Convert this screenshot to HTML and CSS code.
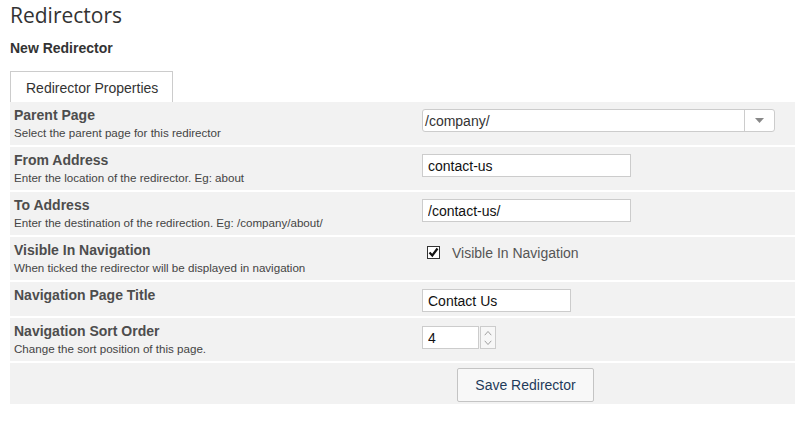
FILE: index.html
```html
<!DOCTYPE html>
<html lang="en">
<head>
    <meta charset="UTF-8">
    <title>Redirectors</title>
    <link rel="stylesheet" href="styles.css">
</head>
<body>
    <h1>Redirectors</h1>
    <h2>New Redirector</h2>

    <div class="tabs">
        <div class="tab">Redirector Properties</div>
    </div>

    <div class="panel">
        <div class="row">
            <div class="info">
                <div class="label">Parent Page</div>
                <div class="desc">Select the parent page for this redirector</div>
            </div>
            <div class="field">
                <div class="chosen">
                    <span class="chosen-text">/company/</span>
                    <span class="chosen-arrow">
                        <svg width="9" height="5" viewBox="0 0 9 5"><path d="M0 0h9L4.5 5z" fill="#888"/></svg>
                    </span>
                </div>
            </div>
        </div>

        <div class="row">
            <div class="info">
                <div class="label">From Address</div>
                <div class="desc">Enter the location of the redirector. Eg: about</div>
            </div>
            <div class="field">
                <input type="text" class="text wide" value="contact-us">
            </div>
        </div>

        <div class="row">
            <div class="info">
                <div class="label">To Address</div>
                <div class="desc">Enter the destination of the redirection. Eg: /company/about/</div>
            </div>
            <div class="field">
                <input type="text" class="text wide" value="/contact-us/">
            </div>
        </div>

        <div class="row">
            <div class="info">
                <div class="label">Visible In Navigation</div>
                <div class="desc">When ticked the redirector will be displayed in navigation</div>
            </div>
            <div class="field">
                <label class="check">
                    <span class="box">
                        <svg width="11" height="11" viewBox="0 0 11 11"><path d="M1.5 5.5l2.8 3L9.5 1.5" fill="none" stroke="#111" stroke-width="2.2"/></svg>
                    </span>
                    Visible In Navigation
                </label>
            </div>
        </div>

        <div class="row">
            <div class="info">
                <div class="label">Navigation Page Title</div>
            </div>
            <div class="field">
                <input type="text" class="text medium" value="Contact Us">
            </div>
        </div>

        <div class="row">
            <div class="info">
                <div class="label">Navigation Sort Order</div>
                <div class="desc">Change the sort position of this page.</div>
            </div>
            <div class="field">
                <div class="number">
                    <input type="text" class="text small" value="4">
                    <span class="spin">
                        <svg width="15" height="22" viewBox="0 0 15 22"><path d="M4 8l3.5-4L11 8M4 14l3.5 4L11 14" fill="none" stroke="#999" stroke-width="1"/></svg>
                    </span>
                </div>
            </div>
        </div>

        <div class="row last">
            <button class="save">Save Redirector</button>
        </div>
    </div>
</body>
</html>
```

FILE: styles.css
```css
body {
    margin: 0 0 0 10px;
    font-family: "Liberation Sans", Arial, sans-serif;
    color: #333;
    background: #fff;
}
h1 {
    font-family: "Open Sans", sans-serif;
    font-weight: normal;
    font-size: 21px;
    line-height: 30px;
    margin: 0;
    color: #333;
}
h2 {
    font-size: 14px;
    font-weight: bold;
    line-height: 18px;
    margin: 9px 0 0;
}
.tabs {
    margin-top: 14px;
    display: flex;
}
.tab {
    border: 1px solid #ccc;
    border-bottom: none;
    padding: 0 14px 0 15px;
    height: 30px;
    line-height: 32px;
    font-size: 14px;
    background: #fff;
}
.panel {
    background: #f2f2f2;
}
.row {
    display: grid;
    grid-template-columns: 408px 1fr;
    align-items: start;
    padding: 4px 4px 3px;
    border-bottom: 2px solid #fff;
}
.row.last {
    border-bottom: none;
    display: block;
    padding: 5px 0 2px 447px;
}
.label {
    font-size: 14px;
    font-weight: bold;
    color: #4d4d4d;
    line-height: 18px;
}
.desc {
    font-size: 11.6px;
    color: #444;
    line-height: 18px;
}
.field {
    padding-top: 3px;
    padding-bottom: 1px;
}
.text {
    box-sizing: border-box;
    height: 23px;
    border: 1px solid #ccc;
    padding: 2px 5px;
    font-family: "Liberation Sans", Arial, sans-serif;
    font-size: 14px;
    color: #111;
    background: #fff;
    margin: 0;
    outline: none;
}
.wide {
    width: 209px;
}
.medium {
    width: 149px;
}
.small {
    width: 57px;
}
.chosen {
    box-sizing: border-box;
    width: 353px;
    height: 23px;
    border: 1px solid #ccc;
    border-radius: 3px;
    background: #fff;
    display: flex;
    align-items: center;
}
.chosen-text {
    flex: 1;
    padding-left: 2px;
    font-size: 14px;
    color: #333;
}
.chosen-arrow {
    width: 29px;
    height: 100%;
    border-left: 1px solid #ccc;
    display: flex;
    align-items: center;
    justify-content: center;
}
.check {
    display: flex;
    align-items: center;
    font-size: 14px;
    color: #555;
    margin: 1px 0 0 5px;
    height: 15px;
}
.box {
    box-sizing: border-box;
    width: 13px;
    height: 13px;
    border: 1px solid #333;
    background: #fff;
    margin-right: 12px;
    display: flex;
    align-items: center;
    justify-content: center;
}
.number {
    display: flex;
    margin-top: 1px;
}
.spin {
    box-sizing: border-box;
    width: 16px;
    height: 23px;
    border: 1px solid #ccc;
    margin-left: 1px;
    background: #f7f7f7;
    display: flex;
    align-items: center;
    justify-content: center;
}
.save {
    box-sizing: border-box;
    width: 137px;
    height: 34px;
    border: 1px solid #c4c4c4;
    border-radius: 2px;
    background: #f8f8f8;
    color: #1f3b5a;
    font-family: "Liberation Sans", Arial, sans-serif;
    font-size: 14px;
    cursor: pointer;
}
```
